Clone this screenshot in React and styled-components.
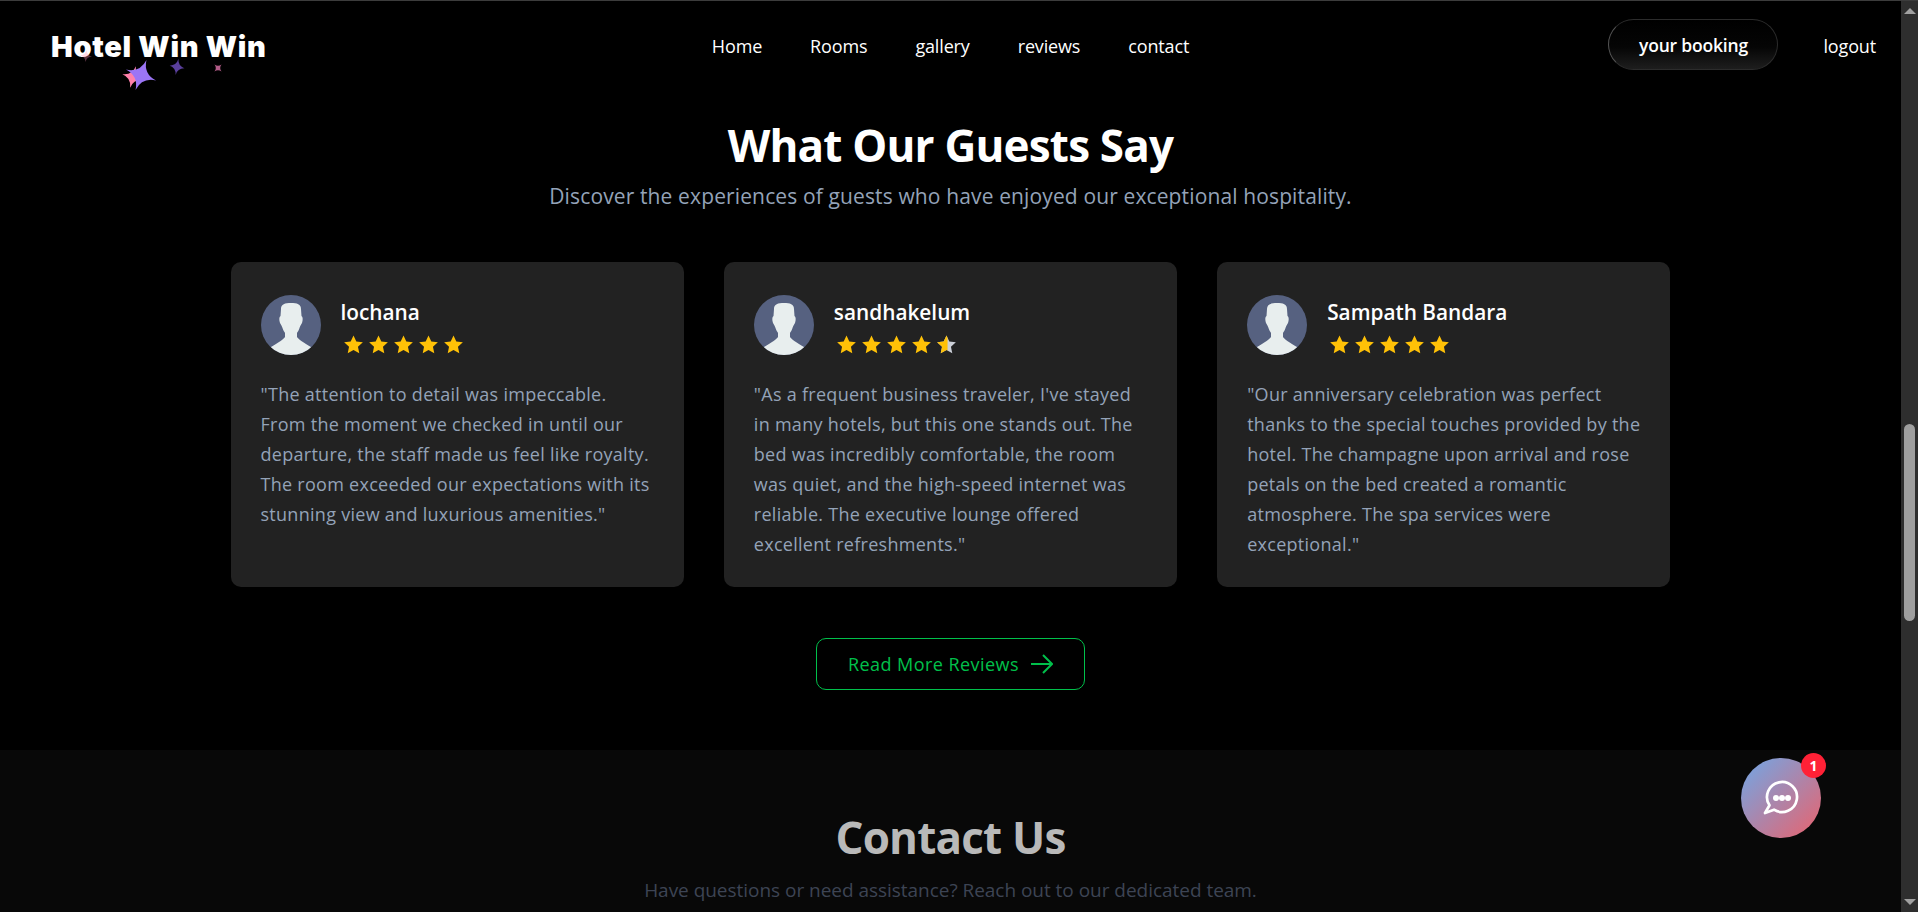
import React from "react";
import styled, { createGlobalStyle } from "styled-components";

const Global = createGlobalStyle`
  html, body { margin: 0; padding: 0; background: #000; height: 912px; overflow: hidden; }
  #root { height: 912px; }
  * { box-sizing: border-box; }
`;

const Frame = styled.div`
  display: flex; height: 912px; width: 1918px; overflow: hidden; position: relative;
  font-family: "Open Sans", "Noto Sans", sans-serif; color: #fff; background: #000;
  border-top: 1px solid #3c3c3c;
`;
const Page = styled.div`display: flex; flex-direction: column; width: 1901px; height: 911px; overflow: hidden;`;
const ScrollTrack = styled.div`
  width: 17px; height: 100%; background: #2e2e2e; display: flex; flex-direction: column; align-items: center; position: relative;
`;
const ScrollArrow = styled.div`
  width: 0; height: 0; margin: 7px 0; border-left: 6px solid transparent; border-right: 6px solid transparent;
  ${p => p.$down ? "border-top: 6px solid #a0a0a0;" : "border-bottom: 6px solid #a0a0a0;"}
`;
const ScrollSpace = styled.div`flex: 1; padding-top: 403px;`;
const ScrollThumb = styled.div`width: 11px; height: 197px; border-radius: 6px; background: #9f9f9f;`;

const Nav = styled.nav`display: grid; grid-template-columns: 1fr auto 1fr; align-items: center; height: 90px;`;
const LogoBox = styled.div`position: relative; padding-left: 51px; height: 90px; display: flex; align-items: center;`;
const LogoText = styled.span`
  font-family: "Inter", sans-serif; font-weight: 900; font-size: 29px; letter-spacing: 0.7px; margin-top: 0; line-height: 1;
`;
const Sparkles = styled.svg`position: absolute; left: 0; top: 0; width: 300px; height: 90px; pointer-events: none;`;
const Links = styled.div`display: flex; gap: 48px;`;
const NavLink = styled.a`font-size: 18px; color: #fff; line-height: 24px; letter-spacing: -0.15px; margin-top: -1px;`;
const NavRight = styled.div`display: flex; justify-content: flex-end; align-items: center; gap: 45px; padding-right: 25px;`;
const BookingButton = styled.button`
  width: 170px; height: 51px; border-radius: 26px; border: 1px solid #2c2c2c; color: #fff; margin-top: -3px;
  font: 600 17.5px "Open Sans", sans-serif; letter-spacing: -0.2px;
  background: linear-gradient(180deg, #000 0%, #050505 55%, #1e1e1e 100%);
  border-left-color: #555;
`;
const Logout = styled(NavLink)``;

const Reviews = styled.section`display: flex; flex-direction: column; align-items: center; height: 659px; padding-top: 24px;`;
const Title = styled.h2`
  margin: 0; font-size: 44px; font-weight: 700; line-height: 60px; letter-spacing: -0.8px; color: ${p => p.$dim ? "#b9b9b9" : "#fff"};
`;
const Subtitle = styled.p`
  margin: 6px 0 0; font-size: 21px; line-height: 30px; letter-spacing: 0.13px; color: ${p => p.$dim ? "#3d4454" : "#94a3b8"};
`;
const Cards = styled.div`display: flex; gap: 40px; margin-top: 51px;`;
const Card = styled.article`width: 453.33px; height: 325px; background: #222; border-radius: 10px; padding: 33px 30px;`;
const CardHead = styled.header`display: flex; gap: 20px; align-items: flex-start;`;
const Avatar = styled.svg`width: 60px; height: 60px; flex: none; display: block;`;
const Who = styled.div`display: flex; flex-direction: column;`;
const Name = styled.div`font-size: 20.8px; font-weight: 600; line-height: 30px; margin-top: 2px;`;
const Stars = styled.div`display: flex; gap: 4px; margin-top: 7px; padding-left: 2px;`;
const Star = styled.svg`width: 21px; height: 21px; display: block;`;
const Quote = styled.p`margin: 24px 0 0; font-size: 18px; line-height: 30px; letter-spacing: 0.28px; color: #94a3b8;`;
const MoreButton = styled.a`
  margin-top: 51px; width: 269px; height: 52px; border: 1px solid #00c04b; border-radius: 10px; color: #00c04b;
  display: flex; align-items: center; justify-content: center; gap: 12px; font-size: 18px; letter-spacing: 0.45px;
`;
const Arrow = styled.svg`width: 22px; height: 20px; display: block;`;

const Contact = styled.section`flex: 1; background: #080808; display: flex; flex-direction: column; align-items: center; padding-top: 57px;`;
const ContactSub = styled(Subtitle)`font-size: 19px; margin-top: 8px; letter-spacing: -0.03px;`;

const ChatButton = styled.button`
  position: absolute; left: 1741px; top: 757px; width: 80px; height: 80px; border-radius: 50%; border: 0; padding: 0;
  background: linear-gradient(135deg, #6fa8e8 0%, #ea626c 100%);
  display: flex; align-items: center; justify-content: center;
`;
const Badge = styled.span`
  position: absolute; right: -5px; top: -5px; width: 25px; height: 25px; border-radius: 50%; background: #ff2136; color: #fff;
  font: 700 14px/25px "Open Sans", sans-serif; text-align: center;
`;

const sparkle = (cx, cy, r, rot, fill, op = 1) => {
  const k = r * 0.28;
  return (
    <path
      key={`${cx}-${cy}`}
      transform={`translate(${cx} ${cy}) rotate(${rot})`}
      fill={fill}
      opacity={op}
      d={`M0 ${-r} Q${k * 0.4} ${-k * 0.4} ${r} 0 Q${k * 0.4} ${k * 0.4} 0 ${r} Q${-k * 0.4} ${k * 0.4} ${-r} 0 Q${-k * 0.4} ${-k * 0.4} 0 ${-r}Z`}
    />
  );
};

const STAR = "M12 1.6l3.2 6.9 7.5.9-5.6 5.1 1.5 7.4L12 18.2l-6.6 3.7 1.5-7.4L1.3 9.4l7.5-.9z";

const StarIcon = ({ id, part = 1 }) => (
  <Star viewBox="0 0 24 24">
    {part < 1 && (
      <defs>
        <clipPath id={id}><rect x="0" y="0" width={24 * part} height="24" /></clipPath>
      </defs>
    )}
    {part < 1 && <path d={STAR} fill="#ccd0d8" />}
    <path d={STAR} fill="#ffc107" clipPath={part < 1 ? `url(#${id})` : undefined} />
  </Star>
);

const AvatarIcon = ({ id }) => (
  <Avatar viewBox="0 0 60 60">
    <defs><clipPath id={id}><circle cx="30" cy="30" r="30" /></clipPath></defs>
    <circle cx="30" cy="30" r="30" fill="#566180" />
    <path
      clipPath={`url(#${id})`}
      fill="#e8eeee"
      d="M20 14C20 9 24 8 30 8C36 8 40 9 40 14L40.500 21C42 22 42 25 41 28C40 30 39 31 38.500 33C38 35 36.500 37 36 38L36 42C37 44 43 48 50 52L50 60L10 60L10 52C17 48 23 44 24 42L24 38C23.500 37 22 35 21.500 33C21 31 20 30 19 28C18 25 18 22 19.500 21Z"
    />
  </Avatar>
);

const reviews = [
  { name: "lochana", part: 1, text: '"The attention to detail was impeccable. From the moment we checked in until our departure, the staff made us feel like royalty. The room exceeded our expectations with its stunning view and luxurious amenities."' },
  { name: "sandhakelum", part: 0.55, text: '"As a frequent business traveler, I\'ve stayed in many hotels, but this one stands out. The bed was incredibly comfortable, the room was quiet, and the high-speed internet was reliable. The executive lounge offered excellent refreshments."' },
  { name: "Sampath Bandara", part: 1, text: '"Our anniversary celebration was perfect thanks to the special touches provided by the hotel. The champagne upon arrival and rose petals on the bed created a romantic atmosphere. The spa services were exceptional."' },
];

export default function App() {
  return (
    <>
      <Global />
      <Frame>
        <Page>
          <Nav>
            <LogoBox>
              <LogoText>Hotel Win Win</LogoText>
              <Sparkles viewBox="0 0 300 90">
                {sparkle(86, 55, 6, 5, "#ff8fb8", 0.35)}
                {sparkle(133, 76, 11, 15, "#ff80ab")}
                {sparkle(141, 74, 16, 20, "#9b75f5")}
                {sparkle(177, 66, 8, 10, "#5a3f9c")}
                {sparkle(218, 67, 5, 45, "#b25c88")}
              </Sparkles>
            </LogoBox>
            <Links>
              {["Home", "Rooms", "gallery", "reviews", "contact"].map(l => <NavLink key={l}>{l}</NavLink>)}
            </Links>
            <NavRight>
              <BookingButton>your booking</BookingButton>
              <Logout>logout</Logout>
            </NavRight>
          </Nav>
          <Reviews>
            <Title>What Our Guests Say</Title>
            <Subtitle>Discover the experiences of guests who have enjoyed our exceptional hospitality.</Subtitle>
            <Cards>
              {reviews.map((r, i) => (
                <Card key={r.name}>
                  <CardHead>
                    <AvatarIcon id={`av${i}`} />
                    <Who>
                      <Name>{r.name}</Name>
                      <Stars>
                        {[0, 1, 2, 3].map(s => <StarIcon key={s} />)}
                        <StarIcon id={`half${i}`} part={r.part} />
                      </Stars>
                    </Who>
                  </CardHead>
                  <Quote>{r.text}</Quote>
                </Card>
              ))}
            </Cards>
            <MoreButton>
              Read More Reviews
              <Arrow viewBox="0 0 22 20" fill="none" stroke="#00c04b" strokeWidth="2">
                <path d="M0 10h21M12 1l9 9-9 9" />
              </Arrow>
            </MoreButton>
          </Reviews>
          <Contact>
            <Title $dim>Contact Us</Title>
            <ContactSub $dim>Have questions or need assistance? Reach out to our dedicated team.</ContactSub>
          </Contact>
        </Page>
        <ScrollTrack>
          <ScrollArrow />
          <ScrollSpace><ScrollThumb /></ScrollSpace>
          <ScrollArrow $down />
        </ScrollTrack>
        <ChatButton aria-label="chat">
          <svg width="40" height="40" viewBox="0 0 40 40" fill="none">
            <path d="M4 35L8.500 27.300A15 15 0 1 1 13 31.700Z" stroke="#fff" strokeWidth="2.700" strokeLinejoin="round" />
            <circle cx="15" cy="20" r="3" fill="#fff" />
            <circle cx="21" cy="20" r="3" fill="#fff" />
            <circle cx="27" cy="20" r="3" fill="#fff" />
          </svg>
          <Badge>1</Badge>
        </ChatButton>
      </Frame>
    </>
  );
}
